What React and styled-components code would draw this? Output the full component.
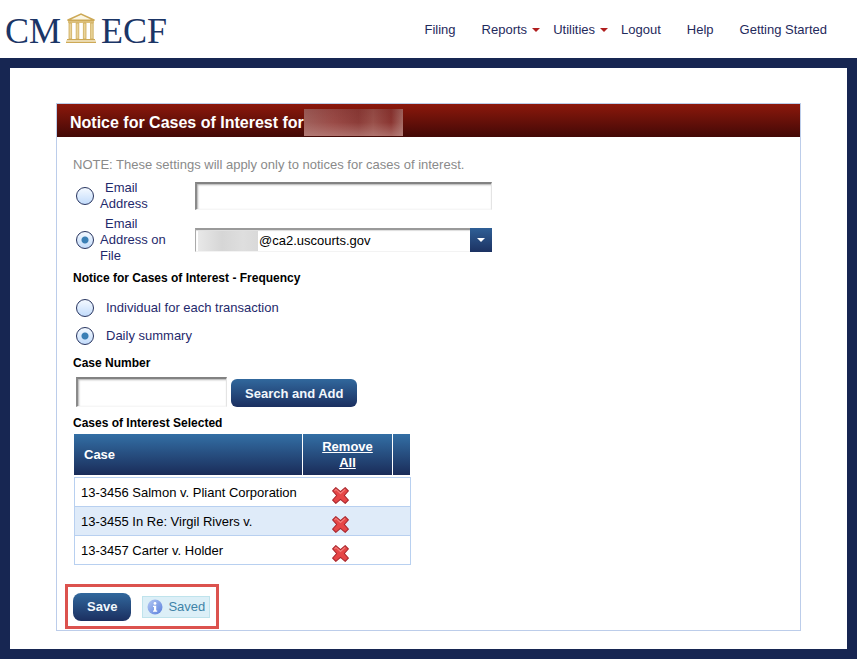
import React, { useState } from 'react';
import styled, { createGlobalStyle } from 'styled-components';


const GlobalStyle = createGlobalStyle`
    * {
        box-sizing: border-box;
    }
    body {
        margin: 0;
        background-color: #172652;
        font-family: "Liberation Sans", Arial, sans-serif;
        font-size: 13px;
        line-height: 16px;
        color: #1f2a5c;
    }
    button, input, select {
        font-family: inherit;
        font-size: inherit;
    }
`
const Header = styled.header`
    display: flex;
    align-items: center;
    justify-content: space-between;
    height: 58px;
    padding: 2px 17px 0 5px;
    background-color: white;
`
const Logo = styled.a`
    display: flex;
    align-items: baseline;
    gap: 4px;
    padding-top: 2px;
    color: #1b3566;
    font-family: "Liberation Serif", "Times New Roman", serif;
    font-size: 36px;
    line-height: 40px;
    text-decoration: none;
`
const Nav = styled.nav`
    display: flex;
    align-items: center;
`
const NavLink = styled.a`
    padding: 0 13px;
    color: #1f2a5c;
    text-decoration: none;
`
const NavMenu = styled.button`
    display: flex;
    align-items: center;
    gap: 5px;
    padding: 0 0 0 13px;
    border: none;
    background: none;
    color: #1f2a5c;
    line-height: 16px;
`
const Caret = styled.span`
    border: 4px solid transparent;
    border-top-color: ${props => props.$color};
    border-bottom: none;
`
const Frame = styled.main`
    margin: 10px;
    padding: 35px 46px 18px;
    background-color: white;
`
const Panel = styled.section`
    border: 1px solid #bccdea;
`
const PanelTitle = styled.h1`
    display: flex;
    align-items: center;
    height: 33px;
    margin: 0;
    padding: 4px 13px 0;
    background: linear-gradient(#8c180c, #430906);
    color: white;
    font-size: 16px;
    line-height: 20px;
`
const HiddenName = styled.span`
    width: 99px;
    height: 27px;
    background:
        linear-gradient(rgba(90, 20, 18, 0.15), transparent 50%, rgba(190, 140, 135, 0.6)),
        linear-gradient(90deg, #a0615c, #9a4b47 30%, #8c3c38 55%, #99504a 70%, #8a3531 88%, #a56a64);
`
const Settings = styled.form`
    padding: 20px 16px 1px;
`
const Note = styled.p`
    margin: 0 0 7px;
    color: #8a8a8a;
`
const FieldRow = styled.div`
    display: grid;
    grid-template-columns: 122px minmax(0, 297px);
    align-items: center;
    margin-bottom: 4px;
`
const RadioLabel = styled.label`
    display: flex;
    align-items: center;
    gap: ${props => props.$gap || 6}px;
    padding-left: 3px;
    color: #1f2a6c;
`
const RadioText = styled.span`
    width: ${props => props.$wrap ? '72px' : 'auto'};
    text-indent: ${props => props.$wrap ? '5px' : '0'};
`
const Radio = styled.input`
    appearance: none;
    flex: none;
    width: 18px;
    height: 18px;
    margin: 0;
    border: 1px solid #27345f;
    border-radius: 50%;
    background: linear-gradient(#f4f9ff, #c3dcfb);

    &:checked {
        background:
            radial-gradient(circle, #3a7fb5 3px, transparent 4px),
            linear-gradient(#f4f9ff, #c3dcfb);
    }
`
const TextBox = styled.input`
    width: ${props => props.$short ? '151px' : '100%'};
    height: ${props => props.$short ? '30px' : '28px'};
    padding: 2px 6px;
    border: 1px solid #e4e4e4;
    border-top: 2px solid #828282;
    border-left: 2px solid #8a8a8a;
    border-bottom-color: #f6f6f6;
    box-shadow: inset 1px 1px 2px #b0b0b0;
`
const SelectBox = styled.div`
    position: relative;
    height: 24px;
`
const Select = styled.select`
    appearance: none;
    width: 100%;
    height: 24px;
    padding: 0 26px 0 63px;
    border: 1px solid #f3f3f3;
    border-top: 2px solid #9a9a9a;
    border-left-color: #aaaaaa;
    border-radius: 0;
    background-color: white;
    box-shadow: inset 0 1px 1px #dddddd;
    color: black;
`
const HiddenAccount = styled.span`
    position: absolute;
    top: 3px;
    left: 3px;
    width: 60px;
    height: 20px;
    background: linear-gradient(90deg, #e8e8e8, #d6d6d6 40%, #dedede 75%, #d9d9d9);
    pointer-events: none;
`
const SelectArrow = styled.span`
    position: absolute;
    top: 0;
    right: 0;
    display: flex;
    align-items: center;
    justify-content: center;
    width: 22px;
    height: 24px;
    background: linear-gradient(#2f5f96, #1c3262);
    pointer-events: none;
`
const SmallHeading = styled.h2`
    margin: 0;
    color: black;
    font-size: 12px;
    line-height: 16px;
`
const Frequency = styled.div`
    display: flex;
    flex-direction: column;
    gap: 10px;
    padding: 13px 0 10px;
`
const EmailFields = styled.div`
    padding-bottom: 2px;
`
const SearchRow = styled.div`
    display: flex;
    align-items: flex-end;
    gap: 4px;
    padding: 6px 3px 8px;
`
const Button = styled.button`
    height: 28px;
    padding: 0 14px;
    border: none;
    border-radius: ${props => props.$round || 6}px;
    background: linear-gradient(#31689d, #1b2f60);
    color: #f2f7fc;
    font-weight: bold;
`
const CaseTable = styled.table`
    width: 337px;
    margin: 3px 0 0 1px;
    border-collapse: separate;
    border-spacing: 0;
    table-layout: fixed;
`
const HeadCell = styled.th`
    width: ${props => props.$width};
    height: 43px;
    padding: ${props => props.$center ? '0 10px' : '0 0 0 10px'};
    border-right: 1px solid white;
    border-bottom: 2px solid white;
    background: linear-gradient(#336fa5, #1a2c59) padding-box;
    color: white;
    font-weight: bold;
    text-align: ${props => props.$center ? 'center' : 'left'};
`
const RemoveAll = styled.a`
    color: white;
`
const Cell = styled.td`
    height: 29px;
    padding: ${props => props.$center ? '6px 15px 0 0' : '2px 0 0 6px'};
    border-bottom: 1px solid #b8d0f0;
    background-color: inherit;
    color: black;
    line-height: 16px;
    text-align: ${props => props.$center ? 'center' : 'left'};

    &:first-child {
        border-left: 1px solid #b8d0f0;
    }
    &:last-child {
        border-right: 1px solid #b8d0f0;
    }
`
const CaseRow = styled.tr`
    background-color: white;

    &:nth-child(even) {
        background-color: #dfebf9;
    }
    &:first-child td {
        height: 30px;
        border-top: 1px solid #b8d0f0;
    }
`
const RemoveButton = styled.button`
    display: inline-block;
    padding: 0;
    border: none;
    background: none;
    line-height: 0;
    vertical-align: middle;
`
const SaveBar = styled.div`
    display: inline-flex;
    align-items: center;
    gap: 11px;
    height: 45px;
    margin: 19px 0 0 -8px;
    padding: 0 6px 0 5px;
    border: 3px solid #dc524e;
    vertical-align: top;
`
const Saved = styled.output`
    display: flex;
    align-items: center;
    gap: 5px;
    height: 22px;
    padding: 0 4px;
    border: 1px solid #bfe3ec;
    background-color: #dceff7;
    color: #3f83a8;
`

const Temple = () => (
    <svg width="32" height="30" viewBox="0 0 32 30" aria-hidden="true">
        <path d="M2.5 7.2 L16 1 L29.5 7.2 Z" fill="#fbf6e4" stroke="#cda956" strokeWidth="1.5" />
        <path d="M3 8 H29 V10 H3 Z" fill="#dcc07c" />
        <g fill="#e9d399" stroke="#cda956" strokeWidth="0.8">
            <path d="M4 10 H6.6 V26 H4 Z" />
            <path d="M11.2 10 H13.8 V26 H11.2 Z" />
            <path d="M18.4 10 H21 V26 H18.4 Z" />
            <path d="M25.6 10 H28.2 V26 H25.6 Z" />
        </g>
        <path d="M2 26 H30 V27.4 H2 Z M1 28.4 H31 V30 H1 Z" fill="#cda956" />
        <path d="M1 27.4 H31 V28.4 H1 Z" fill="#f0e0b4" />
    </svg>
)

const RemoveIcon = () => (
    <svg width="17" height="17" viewBox="0 0 16 16" aria-hidden="true">
        <path
            d="M3.6 .6 L8 4.4 L12.4 .6 L15.4 3.6 L11.6 8 L15.4 12.4 L12.4 15.4 L8 11.6 L3.6 15.4 L.6 12.4 L4.4 8 L.6 3.6 Z"
            fill="#e64646"
            stroke="#a8242a"
            strokeWidth="1"
            strokeLinejoin="round"
        />
        <path d="M2.4 3.7 L3.7 2.3 L8 6.1 L12.3 2.3" fill="none" stroke="#f4827e" strokeWidth="1" />
    </svg>
)

const InfoIcon = () => (
    <svg width="16" height="16" viewBox="0 0 16 16" aria-hidden="true">
        <defs>
            <linearGradient id="info" x1="0" y1="0" x2="1" y2="1">
                <stop offset="0" stopColor="#b4c8f4" />
                <stop offset="1" stopColor="#5b80dc" />
            </linearGradient>
        </defs>
        <circle cx="8" cy="8" r="7.5" fill="url(#info)" />
        <circle cx="8" cy="4.4" r="1.4" fill="white" />
        <path d="M6 6.7 H9.2 V11.5 H10.2 V12.8 H6 V11.5 H7 V8 H6 Z" fill="white" />
    </svg>
)

const cases = [
    '13-3456 Salmon v. Pliant Corporation',
    '13-3455 In Re: Virgil Rivers v.',
    '13-3457 Carter v. Holder',
]

export default function App() {

    const [target, setTarget] = useState('file');
    const [frequency, setFrequency] = useState('daily');

    return (
        <>
            <GlobalStyle />
            <Header>
                <Logo href="#">
                    <span>CM</span>
                    <Temple />
                    <span>ECF</span>
                </Logo>
                <Nav>
                    <NavLink href="#">Filing</NavLink>
                    <NavMenu type="button">Reports<Caret $color="#b01e1e" /></NavMenu>
                    <NavMenu type="button">Utilities<Caret $color="#b01e1e" /></NavMenu>
                    <NavLink href="#">Logout</NavLink>
                    <NavLink href="#">Help</NavLink>
                    <NavLink href="#">Getting Started</NavLink>
                </Nav>
            </Header>
            <Frame>
                <Panel>
                    <PanelTitle>Notice for Cases of Interest for <HiddenName /></PanelTitle>
                    <Settings onSubmit={e => e.preventDefault()}>
                        <Note>NOTE: These settings will apply only to notices for cases of interest.</Note>
                        <EmailFields>
                            <FieldRow>
                                <RadioLabel>
                                    <Radio type="radio" name="target" checked={target === 'other'} onChange={() => setTarget('other')} />
                                    <RadioText $wrap>Email Address</RadioText>
                                </RadioLabel>
                                <TextBox type="email" aria-label="Email Address" />
                            </FieldRow>
                            <FieldRow>
                                <RadioLabel>
                                    <Radio type="radio" name="target" checked={target === 'file'} onChange={() => setTarget('file')} />
                                    <RadioText $wrap>Email Address on File</RadioText>
                                </RadioLabel>
                                <SelectBox>
                                    <Select aria-label="Email Address on File">
                                        <option>@ca2.uscourts.gov</option>
                                    </Select>
                                    <HiddenAccount />
                                    <SelectArrow><Caret $color="white" /></SelectArrow>
                                </SelectBox>
                            </FieldRow>
                        </EmailFields>
                        <SmallHeading>Notice for Cases of Interest - Frequency</SmallHeading>
                        <Frequency>
                            <RadioLabel $gap={12}>
                                <Radio type="radio" name="frequency" checked={frequency === 'each'} onChange={() => setFrequency('each')} />
                                <RadioText>Individual for each transaction</RadioText>
                            </RadioLabel>
                            <RadioLabel $gap={12}>
                                <Radio type="radio" name="frequency" checked={frequency === 'daily'} onChange={() => setFrequency('daily')} />
                                <RadioText>Daily summary</RadioText>
                            </RadioLabel>
                        </Frequency>
                        <SmallHeading><label htmlFor="case-number">Case Number</label></SmallHeading>
                        <SearchRow>
                            <TextBox id="case-number" type="text" $short />
                            <Button type="button">Search and Add</Button>
                        </SearchRow>
                        <SmallHeading>Cases of Interest Selected</SmallHeading>
                        <CaseTable>
                            <thead>
                                <tr>
                                    <HeadCell $width="229px">Case</HeadCell>
                                    <HeadCell $width="90px" $center><RemoveAll href="#">Remove All</RemoveAll></HeadCell>
                                    <HeadCell $width="18px" aria-label="Scroll" />
                                </tr>
                            </thead>
                            <tbody>
                                {cases.map(name =>
                                <CaseRow key={name}>
                                    <Cell>{name}</Cell>
                                    <Cell $center>
                                        <RemoveButton type="button" aria-label={'Remove ' + name}><RemoveIcon /></RemoveButton>
                                    </Cell>
                                    <Cell />
                                </CaseRow>
                                )}
                            </tbody>
                        </CaseTable>
                        <SaveBar>
                            <Button type="submit" $round={8}>Save</Button>
                            <Saved><InfoIcon />Saved</Saved>
                        </SaveBar>
                    </Settings>
                </Panel>
            </Frame>
        </>
    )
}
